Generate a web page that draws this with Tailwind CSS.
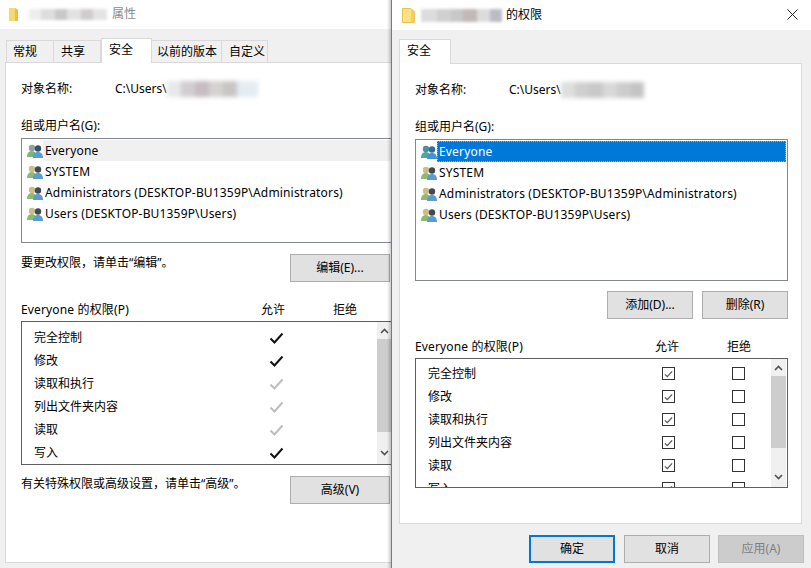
<!DOCTYPE html>
<html lang="zh-CN">
<head>
    <meta charset="UTF-8">
    <title>权限</title>
    <script src="https://cdn.jsdelivr.net/npm/@tailwindcss/browser@4"></script>
</head>
<body class="relative w-[811px] h-[568px] overflow-hidden bg-white text-[12px] leading-[18px] text-black font-['Noto_Sans','Noto_Sans_CJK_SC',sans-serif]">

    <svg class="hidden">
        <symbol id="users" viewBox="0 0 16 16">
            <circle cx="5" cy="5" r="3.2" fill="#cdbb8a"/>
            <path d="M0 14c0-4 2-6 5-6 2 0 3 1 3.5 2v4z" fill="#8dbb6e"/>
            <circle cx="11" cy="5.5" r="3.2" fill="#3f4a55"/>
            <path d="M6 15c0-4 2-6 5-6s5 2 5 6z" fill="#5b9bd0"/>
        </symbol>
        <symbol id="users-gray" viewBox="0 0 16 16">
            <circle cx="5" cy="5" r="3.2" fill="#8ca39a"/>
            <path d="M0 14c0-4 2-6 5-6 2 0 3 1 3.5 2v4z" fill="#7eb27a"/>
            <circle cx="11" cy="5.5" r="3.2" fill="#34506a"/>
            <path d="M6 15c0-4 2-6 5-6s5 2 5 6z" fill="#5b9bd0"/>
        </symbol>
        <symbol id="users-sel" viewBox="0 0 16 16">
            <circle cx="5" cy="5" r="3.2" fill="#4f8f9c"/>
            <path d="M0 14c0-4 2-6 5-6 2 0 3 1 3.5 2v4z" fill="#4ea7a0"/>
            <circle cx="11" cy="5.5" r="3.2" fill="#2f6f9f"/>
            <path d="M6 15c0-4 2-6 5-6s5 2 5 6z" fill="#3f94d8"/>
        </symbol>
        <symbol id="check" viewBox="0 0 15 12">
            <path d="M1.5 6.5l4 4 8-9" fill="none" stroke="currentColor" stroke-width="2"/>
        </symbol>
        <symbol id="up" viewBox="0 0 9 6">
            <path d="M1 5l3.5-3.5L8 5" fill="none" stroke="#505050" stroke-width="1.6"/>
        </symbol>
        <symbol id="down" viewBox="0 0 9 6">
            <path d="M1 1l3.5 3.5L8 1" fill="none" stroke="#505050" stroke-width="1.6"/>
        </symbol>
    </svg>

    <!-- left window: properties -->
    <div class="absolute left-0 top-0 w-[392px] h-[568px] bg-[#f0f0f0] overflow-hidden">
        <div class="h-[29px] bg-white flex items-center pl-[9px] pb-[1px]">
            <svg class="w-[9px] h-[13px]" viewBox="0 0 9 13"><path d="M0 0h6l3 2v11H0z" fill="#f6d874"/><path d="M6 0l3 2v11H6z" fill="#eebf3f"/></svg>
            <div class="ml-[11px] w-[78px] h-[11px] flex blur-[1.5px]">
                <span class="w-[12px] bg-[#eeeeee]"></span><span class="w-[14px] bg-[#dddddd]"></span><span class="w-[12px] bg-[#c8c8c8]"></span><span class="w-[14px] bg-[#e2e2e2]"></span><span class="w-[12px] bg-[#d0cccc]"></span><span class="w-[14px] bg-[#e4e4e4]"></span>
            </div>
            <span class="ml-[5px] text-[#8a8a8a] mt-[-1px]">属性</span>
        </div>
        <div class="flex items-end h-[33px] pl-[6px]">
            <div class="w-[48px] h-[22px] pl-[6px] flex items-center bg-[#f0f0f0] border border-[#d9d9d9] border-b-0">常规</div>
            <div class="w-[47px] h-[22px] pl-[7px] flex items-center bg-[#f0f0f0] border border-[#d9d9d9] border-b-0 border-l-0">共享</div>
            <div class="w-[51px] h-[25px] pb-[2px] pl-[7px] flex items-center bg-white border border-[#d9d9d9] border-b-0 relative top-[1px] z-10">安全</div>
            <div class="w-[70px] h-[22px] pl-[5px] flex items-center bg-[#f0f0f0] border border-[#d9d9d9] border-b-0 border-l-0">以前的版本</div>
            <div class="w-[46px] h-[22px] pl-[7px] flex items-center bg-[#f0f0f0] border border-[#d9d9d9] border-b-0 border-l-0">自定义</div>
        </div>
        <div class="ml-[5px] w-[400px] h-[501px] bg-white border border-[#d9d9d9] pl-[15px]">
            <div class="mt-[17px] flex h-[18px]">
                <span class="w-[94px]">对象名称:</span>
                <span>C:\Users\</span>
                <div class="w-[91px] h-[16px] flex blur-[2px] mt-[1px]">
                    <span class="w-[14px] bg-[#e8e8e8]"></span><span class="w-[14px] bg-[#d2cdd0]"></span><span class="w-[14px] bg-[#c6bcc2]"></span><span class="w-[14px] bg-[#d6d2d2]"></span><span class="w-[14px] bg-[#c9c5c5]"></span><span class="w-[21px] bg-[#e4ecf2]"></span>
                </div>
            </div>
            <div class="mt-[19px] h-[18px]">组或用户名(G):</div>
            <div class="mt-[3px] w-[380px] h-[105px] border border-[#828790] pt-[1px] tracking-[0.17px]">
                <div class="h-[21px] flex items-center pl-[5px]">
                    <svg class="w-[16px] h-[16px]"><use href="#users-gray"/></svg>
                    <span class="flex-1 h-[21px] leading-[21px] pl-[2px] bg-[#f0f0f0]">Everyone</span>
                </div>
                <div class="h-[21px] flex items-center pl-[5px]">
                    <svg class="w-[16px] h-[16px]"><use href="#users"/></svg>
                    <span class="pl-[2px]">SYSTEM</span>
                </div>
                <div class="h-[21px] flex items-center pl-[5px]">
                    <svg class="w-[16px] h-[16px]"><use href="#users"/></svg>
                    <span class="pl-[2px]">Administrators (DESKTOP-BU1359P\Administrators)</span>
                </div>
                <div class="h-[21px] flex items-center pl-[5px]">
                    <svg class="w-[16px] h-[16px]"><use href="#users"/></svg>
                    <span class="pl-[2px]">Users (DESKTOP-BU1359P\Users)</span>
                </div>
            </div>
            <div class="mt-[11px] flex h-[28px]">
                <span class="w-[269px]">要更改权限&#xFF0C;请单击“编辑”。</span>
                <div class="w-[100px] h-[28px] bg-[#e1e1e1] border border-[#adadad] flex items-center justify-center">编辑(E)...</div>
            </div>
            <div class="mt-[19px] h-[18px] flex">
                <span class="w-[240px] tracking-[0.15px]">Everyone 的权限(P)</span>
                <span class="w-[24px] text-center whitespace-nowrap">允许</span>
                <span class="w-[24px] text-center whitespace-nowrap ml-[48px]">拒绝</span>
            </div>
            <div class="mt-[2px] w-[372px] h-[144px] border border-[#5f5f5f] flex">
                <div class="flex-1 pt-[4px] pl-[12px]">
                    <div class="h-[23px] flex items-center"><span class="w-[235px]">完全控制</span><svg class="w-[15px] h-[12px] text-[#111]"><use href="#check"/></svg></div>
                    <div class="h-[23px] flex items-center"><span class="w-[235px]">修改</span><svg class="w-[15px] h-[12px] text-[#111]"><use href="#check"/></svg></div>
                    <div class="h-[23px] flex items-center"><span class="w-[235px]">读取和执行</span><svg class="w-[15px] h-[12px] text-[#bdbdbd]"><use href="#check"/></svg></div>
                    <div class="h-[23px] flex items-center"><span class="w-[235px]">列出文件夹内容</span><svg class="w-[15px] h-[12px] text-[#bdbdbd]"><use href="#check"/></svg></div>
                    <div class="h-[23px] flex items-center"><span class="w-[235px]">读取</span><svg class="w-[15px] h-[12px] text-[#bdbdbd]"><use href="#check"/></svg></div>
                    <div class="h-[23px] flex items-center"><span class="w-[235px]">写入</span><svg class="w-[15px] h-[12px] text-[#111]"><use href="#check"/></svg></div>
                </div>
                <div class="w-[15px] flex flex-col bg-[#f0f0f0]">
                    <div class="h-[17px] flex items-center justify-center"><svg class="w-[9px] h-[6px]"><use href="#up"/></svg></div>
                    <div class="h-[93px] bg-[#cdcdcd]"></div>
                    <div class="flex-1 flex items-center justify-center pt-[9px]"><svg class="w-[9px] h-[6px]"><use href="#down"/></svg></div>
                </div>
            </div>
            <div class="mt-[11px] flex h-[28px]">
                <span class="w-[269px] mt-[-1px]">有关特殊权限或高级设置&#xFF0C;请单击“高级”。</span>
                <div class="w-[100px] h-[28px] bg-[#e1e1e1] border border-[#adadad] flex items-center justify-center">高级(V)</div>
            </div>
        </div>
        <div class="absolute right-0 top-0 w-[5px] h-[568px] bg-gradient-to-r from-black/0 to-black/25"></div>
    </div>

    <!-- right window: permissions dialog -->
    <div class="absolute left-[391px] top-0 w-[420px] h-[568px] bg-[#f0f0f0] border-l border-[#7a7a7a] overflow-hidden">
        <div class="h-[30px] bg-white flex items-center pl-[10px] pr-[10px]">
            <svg class="w-[13px] h-[15px]" viewBox="0 0 13 15"><path d="M.5.5h8l4 3v11H.5z" fill="#fbe08a" stroke="#e8c04a"/><path d="M9 .5l3.5 3v11H9z" fill="#f3cf5e"/></svg>
            <div class="ml-[6px] w-[81px] h-[13px] flex blur-[1.5px]">
                <span class="w-[16px] bg-[#dcdcdc]"></span><span class="w-[14px] bg-[#d0d0d0]"></span><span class="w-[12px] bg-[#c8c8c8]"></span><span class="w-[14px] bg-[#c2b8b8]"></span><span class="w-[13px] bg-[#dcdcdc]"></span><span class="w-[12px] bg-[#bcbcc4]"></span>
            </div>
            <span class="ml-[4px] mt-[-1px]">的权限</span>
            <svg class="w-[11px] h-[11px] ml-auto mr-[3px] mt-[-2px]" viewBox="0 0 11 11"><path d="M.5.5l10 10M10.5.5l-10 10" stroke="#222" fill="none"/></svg>
        </div>
        <div class="flex items-end h-[33px] pl-[7px]">
            <div class="w-[52px] h-[25px] pb-[2px] pl-[7px] flex items-center bg-white border border-[#d9d9d9] border-b-0 relative top-[1px] z-10">安全</div>
        </div>
        <div class="ml-[7px] w-[403px] h-[461px] bg-white border border-[#d9d9d9] pl-[15px]">
            <div class="mt-[17px] flex h-[18px]">
                <span class="w-[94px]">对象名称:</span>
                <span>C:\Users\</span>
                <div class="w-[83px] h-[16px] flex blur-[2px] mt-[1px]">
                    <span class="w-[14px] bg-[#dedede]"></span><span class="w-[14px] bg-[#cfcfcf]"></span><span class="w-[14px] bg-[#c8c8c8]"></span><span class="w-[14px] bg-[#d8d8d8]"></span><span class="w-[14px] bg-[#cccccc]"></span><span class="w-[13px] bg-[#c4c4c4]"></span>
                </div>
            </div>
            <div class="mt-[19px] h-[18px]">组或用户名(G):</div>
            <div class="mt-[3px] w-[373px] h-[142px] border border-[#828790] pt-[1px] tracking-[0.17px]">
                <div class="h-[21px] flex items-center pl-[5px] pr-[1px]">
                    <svg class="w-[16px] h-[16px]"><use href="#users-sel"/></svg>
                    <span class="flex-1 h-[21px] leading-[19px] pl-[1px] text-white bg-[#0078d7] border border-dotted border-[#f0a040]">Everyone</span>
                </div>
                <div class="h-[21px] flex items-center pl-[5px]">
                    <svg class="w-[16px] h-[16px]"><use href="#users"/></svg>
                    <span class="pl-[2px]">SYSTEM</span>
                </div>
                <div class="h-[21px] flex items-center pl-[5px]">
                    <svg class="w-[16px] h-[16px]"><use href="#users"/></svg>
                    <span class="pl-[2px]">Administrators (DESKTOP-BU1359P\Administrators)</span>
                </div>
                <div class="h-[21px] flex items-center pl-[5px]">
                    <svg class="w-[16px] h-[16px]"><use href="#users"/></svg>
                    <span class="pl-[2px]">Users (DESKTOP-BU1359P\Users)</span>
                </div>
            </div>
            <div class="mt-[10px] w-[373px] flex justify-end gap-[9px]">
                <div class="w-[86px] h-[28px] bg-[#e1e1e1] border border-[#adadad] flex items-center justify-center">添加(D)...</div>
                <div class="w-[86px] h-[28px] bg-[#e1e1e1] border border-[#adadad] flex items-center justify-center">删除(R)</div>
            </div>
            <div class="mt-[19px] h-[18px] flex">
                <span class="w-[240px] tracking-[0.15px]">Everyone 的权限(P)</span>
                <span class="w-[24px] text-center whitespace-nowrap">允许</span>
                <span class="w-[24px] text-center whitespace-nowrap ml-[48px]">拒绝</span>
            </div>
            <div class="mt-[2px] w-[373px] h-[130px] border border-[#5f5f5f] flex overflow-hidden">
                <div class="flex-1 pt-[3px] pl-[12px]">
                    <div class="h-[23px] flex items-center"><span class="w-[234px]">完全控制</span><span class="w-[13px] h-[13px] border border-[#333] text-[#555] flex items-center justify-center"><svg class="w-[9px] h-[8px]"><use href="#check"/></svg></span><span class="ml-[57px] w-[13px] h-[13px] border border-[#333]"></span></div>
                    <div class="h-[23px] flex items-center"><span class="w-[234px]">修改</span><span class="w-[13px] h-[13px] border border-[#333] text-[#555] flex items-center justify-center"><svg class="w-[9px] h-[8px]"><use href="#check"/></svg></span><span class="ml-[57px] w-[13px] h-[13px] border border-[#333]"></span></div>
                    <div class="h-[23px] flex items-center"><span class="w-[234px]">读取和执行</span><span class="w-[13px] h-[13px] border border-[#333] text-[#555] flex items-center justify-center"><svg class="w-[9px] h-[8px]"><use href="#check"/></svg></span><span class="ml-[57px] w-[13px] h-[13px] border border-[#333]"></span></div>
                    <div class="h-[23px] flex items-center"><span class="w-[234px]">列出文件夹内容</span><span class="w-[13px] h-[13px] border border-[#333] text-[#555] flex items-center justify-center"><svg class="w-[9px] h-[8px]"><use href="#check"/></svg></span><span class="ml-[57px] w-[13px] h-[13px] border border-[#333]"></span></div>
                    <div class="h-[23px] flex items-center"><span class="w-[234px]">读取</span><span class="w-[13px] h-[13px] border border-[#333] text-[#555] flex items-center justify-center"><svg class="w-[9px] h-[8px]"><use href="#check"/></svg></span><span class="ml-[57px] w-[13px] h-[13px] border border-[#333]"></span></div>
                    <div class="h-[23px] flex items-center"><span class="w-[234px]">写入</span><span class="w-[13px] h-[13px] border border-[#333] text-[#555] flex items-center justify-center"><svg class="w-[9px] h-[8px]"><use href="#check"/></svg></span><span class="ml-[57px] w-[13px] h-[13px] border border-[#333]"></span></div>
                </div>
                <div class="w-[16px] shrink-0 flex flex-col bg-[#f0f0f0] border-r border-white">
                    <div class="h-[17px] flex items-center justify-center"><svg class="w-[9px] h-[6px]"><use href="#up"/></svg></div>
                    <div class="h-[72px] bg-[#cdcdcd]"></div>
                    <div class="flex-1 flex items-center justify-center pt-[18px]"><svg class="w-[9px] h-[6px]"><use href="#down"/></svg></div>
                </div>
            </div>
        </div>
        <div class="mt-[11px] flex pl-[137px]">
            <div class="w-[86px] h-[28px] bg-[#e1e1e1] border-2 border-[#0078d7] flex items-center justify-center">确定</div>
            <div class="ml-[9px] w-[86px] h-[28px] bg-[#e1e1e1] border border-[#adadad] flex items-center justify-center">取消</div>
            <div class="ml-[8px] w-[86px] h-[28px] bg-[#cccccc] border border-[#bfbfbf] text-[#7f7f7f] flex items-center justify-center">应用(A)</div>
        </div>
    </div>

</body>
</html>
